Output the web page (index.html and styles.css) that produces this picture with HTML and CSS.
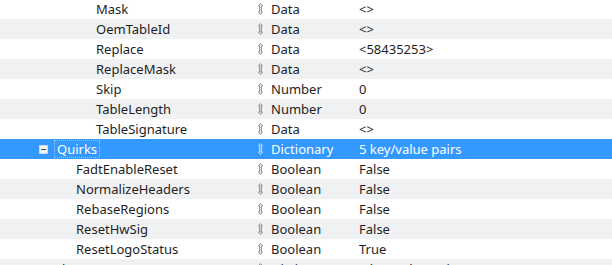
FILE: index.html
```html
<!DOCTYPE html>
<html lang="en">
<head>
    <meta charset="UTF-8">
    <title>Plist editor</title>
    <link rel="stylesheet" href="styles.css">
</head>
<body>
    <div class="tree">
        <div class="row"><div class="key lvl3">Mask</div><div class="type"><span class="arrows"></span>Data</div><div class="value">&lt;&gt;</div></div>
        <div class="row"><div class="key lvl3">OemTableId</div><div class="type"><span class="arrows"></span>Data</div><div class="value">&lt;&gt;</div></div>
        <div class="row"><div class="key lvl3">Replace</div><div class="type"><span class="arrows"></span>Data</div><div class="value">&lt;58435253&gt;</div></div>
        <div class="row"><div class="key lvl3">ReplaceMask</div><div class="type"><span class="arrows"></span>Data</div><div class="value">&lt;&gt;</div></div>
        <div class="row"><div class="key lvl3">Skip</div><div class="type"><span class="arrows"></span>Number</div><div class="value">0</div></div>
        <div class="row"><div class="key lvl3">TableLength</div><div class="type"><span class="arrows"></span>Number</div><div class="value">0</div></div>
        <div class="row"><div class="key lvl3">TableSignature</div><div class="type"><span class="arrows"></span>Data</div><div class="value">&lt;&gt;</div></div>
        <div class="row selected"><div class="key lvl1"><span class="toggle"></span><span class="focus">Quirks</span></div><div class="type"><span class="arrows"></span>Dictionary</div><div class="value">5 key/value pairs</div></div>
        <div class="row"><div class="key lvl2">FadtEnableReset</div><div class="type"><span class="arrows"></span>Boolean</div><div class="value">False</div></div>
        <div class="row"><div class="key lvl2">NormalizeHeaders</div><div class="type"><span class="arrows"></span>Boolean</div><div class="value">False</div></div>
        <div class="row"><div class="key lvl2">RebaseRegions</div><div class="type"><span class="arrows"></span>Boolean</div><div class="value">False</div></div>
        <div class="row"><div class="key lvl2">ResetHwSig</div><div class="type"><span class="arrows"></span>Boolean</div><div class="value">False</div></div>
        <div class="row"><div class="key lvl2">ResetLogoStatus</div><div class="type"><span class="arrows"></span>Boolean</div><div class="value">True</div></div>
        <div class="row"><div class="key lvl0">Patch</div><div class="type"><span class="arrows"></span>Dictionary</div><div class="value">3 key/value pairs</div></div>
    </div>
</body>
</html>
```

FILE: styles.css
```css
body {
    margin: 0;
    background: #ffffff;
    font-family: "Noto Sans", "Open Sans", sans-serif;
    font-size: 13px;
    color: #1e1e1e;
    overflow: hidden;
}
.tree {
    margin-top: -1px;
}
.row {
    display: grid;
    grid-template-columns: 255px 100px 1fr;
    height: 20px;
    line-height: 20px;
    white-space: nowrap;
}
.row:nth-child(even) {
    background-color: #f0f1f2;
}
.row.selected {
    background-color: #3399ff;
    color: #ffffff;
}
.key {
    display: flex;
    align-items: center;
}
.lvl0 { padding-left: 36px; }
.lvl1 { padding-left: 39px; }
.lvl2 { padding-left: 76px; }
.lvl3 { padding-left: 96px; }
.toggle {
    position: relative;
    box-sizing: border-box;
    width: 9px;
    height: 9px;
    border: 1px solid #c8d6e6;
    background: #f4f6f8;
    margin-right: 7px;
}
.toggle::after {
    content: "";
    position: absolute;
    left: 1px;
    top: 3px;
    width: 5px;
    height: 1px;
    background: #4a4a4a;
}
.focus {
    height: 18px;
    line-height: 17px;
    padding: 0 2px;
    margin-left: -1px;
    border: 1px dotted #9ec8f5;
    box-sizing: border-box;
}
.type {
    display: flex;
    align-items: center;
}
.arrows {
    width: 5px;
    height: 12px;
    margin: 0 8px 0 3px;
    background: url("data:image/svg+xml;utf8,<svg xmlns='http://www.w3.org/2000/svg' width='5' height='12' viewBox='0 0 5 12'><path d='M2.5 0.5 L4.5 3 L3.3 3 L3.3 9 L4.5 9 L2.5 11.5 L0.5 9 L1.7 9 L1.7 3 L0.5 3 Z' fill='none' stroke='%23888' stroke-width='1'/></svg>") no-repeat;
}
.selected .arrows {
    background: url("data:image/svg+xml;utf8,<svg xmlns='http://www.w3.org/2000/svg' width='5' height='12' viewBox='0 0 5 12'><path d='M2.5 0.5 L4.5 3 L3.3 3 L3.3 9 L4.5 9 L2.5 11.5 L0.5 9 L1.7 9 L1.7 3 L0.5 3 Z' fill='none' stroke='%23cfe6ff' stroke-width='1'/></svg>") no-repeat;
}
.value {
    padding-left: 4px;
}
```
